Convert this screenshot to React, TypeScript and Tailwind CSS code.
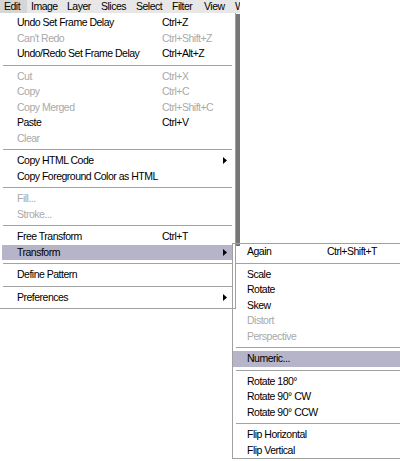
import React from "react";

type Item =
  | { sep: true }
  | { label: string; key?: string; off?: boolean; arrow?: boolean; hot?: boolean };

const mainItems: Item[] = [
  { label: "Undo Set Frame Delay", key: "Ctrl+Z" },
  { label: "Can't Redo", key: "Ctrl+Shift+Z", off: true },
  { label: "Undo/Redo Set Frame Delay", key: "Ctrl+Alt+Z" },
  { sep: true },
  { label: "Cut", key: "Ctrl+X", off: true },
  { label: "Copy", key: "Ctrl+C", off: true },
  { label: "Copy Merged", key: "Ctrl+Shift+C", off: true },
  { label: "Paste", key: "Ctrl+V" },
  { label: "Clear", off: true },
  { sep: true },
  { label: "Copy HTML Code", arrow: true },
  { label: "Copy Foreground Color as HTML" },
  { sep: true },
  { label: "Fill...", off: true },
  { label: "Stroke...", off: true },
  { sep: true },
  { label: "Free Transform", key: "Ctrl+T" },
  { label: "Transform", arrow: true, hot: true },
  { sep: true },
  { label: "Define Pattern" },
  { sep: true },
  { label: "Preferences", arrow: true },
];

const subItems: Item[] = [
  { label: "Again", key: "Ctrl+Shift+T" },
  { sep: true },
  { label: "Scale" },
  { label: "Rotate" },
  { label: "Skew" },
  { label: "Distort", off: true },
  { label: "Perspective", off: true },
  { sep: true },
  { label: "Numeric...", hot: true },
  { sep: true },
  { label: "Rotate 180°" },
  { label: "Rotate 90° CW" },
  { label: "Rotate 90° CCW" },
  { sep: true },
  { label: "Flip Horizontal" },
  { label: "Flip Vertical" },
];

const bar = [
  { t: "Edit", w: "w-[27px]", on: true },
  { t: "Image", w: "w-[36px]" },
  { t: "Layer", w: "w-[34px]" },
  { t: "Slices", w: "w-[35px]" },
  { t: "Select", w: "w-[36px]" },
  { t: "Filter", w: "w-[32px]" },
  { t: "View", w: "w-[31px]" },
  { t: "Window", w: "w-[9px]" },
];

function Arrow() {
  return (
    <svg width="4" height="7" viewBox="0 0 4 7" className="shrink-0">
      <polygon points="0,0 4,3.5 0,7" fill="#000" />
    </svg>
  );
}

function MenuList({ items, keyCol, sub }: { items: Item[]; keyCol: string; sub?: boolean }) {
  return (
    <>
      {items.map((it, i) =>
        "sep" in it ? (
          <div key={i} className={`h-[7px] flex items-center ${sub ? "pl-[3px]" : "px-[3px]"}`}>
            <div className="w-full h-px bg-[#a3a3a3]" />
          </div>
        ) : (
          <div
            key={i}
            className={`h-[15.5px] flex items-center ${sub ? "pl-[14px]" : "mx-[2px] pl-[15px] pr-[6px]"} ${
              it.hot ? "bg-[#b5b4c8]" : ""
            } ${it.off ? "text-[#a9a9a9]" : "text-black"}`}
          >
            <span className={`${keyCol} shrink-0 whitespace-nowrap`}>{it.label}</span>
            <span className="whitespace-nowrap flex-1">{it.key}</span>
            {it.arrow && <Arrow />}
          </div>
        )
      )}
    </>
  );
}

export default function App() {
  return (
    <div
      className="relative w-[400px] h-[461px] bg-white overflow-hidden text-[10.5px] tracking-[-0.5px] leading-[15.5px]"
      style={{ fontFamily: '"Liberation Sans", Arial, sans-serif' }}
    >
      <div className="flex w-[240px] h-[13px] bg-[#e7e7e7] leading-[13px] overflow-hidden">
        {bar.map((b) => (
          <div
            key={b.t}
            className={`${b.w} shrink-0 pl-[4px] whitespace-nowrap overflow-hidden ${
              b.on ? "bg-[#d6d6d6]" : ""
            }`}
          >
            {b.t}
          </div>
        ))}
      </div>

      <div className="flex">
        <div className="w-[236px] border-r border-b border-[#a0a0a0] pt-[2px] pb-[3px]">
          <MenuList items={mainItems} keyCol="w-[145px]" />
        </div>
        <div className="w-[4px] h-[232px] mt-[1px] bg-[#767676]" />
      </div>

      <div className="absolute left-[232px] top-[243px] w-[172px] border-l border-t border-b border-[#a0a0a0]">
        <MenuList items={subItems} keyCol="w-[80px]" sub />
      </div>
    </div>
  );
}
